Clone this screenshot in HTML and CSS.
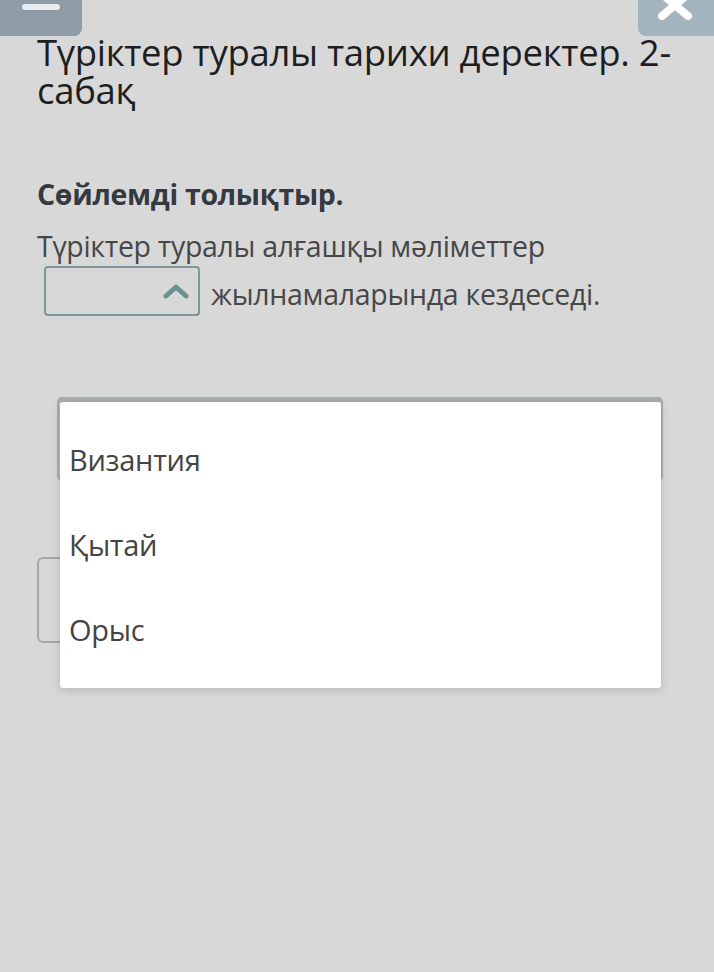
FILE: index.html
```html
<!DOCTYPE html>
<html lang="kk">
<head>
<meta charset="utf-8">
<link rel="stylesheet" href="styles.css">
</head>
<body>
<div class="topbar">
  <div class="btn-min"><span class="minus"></span></div>
  <div class="btn-close">
    <svg width="44" height="20" viewBox="0 0 44 20"><path d="M8 -6 L34 16 M34 -6 L8 16" stroke="#fff" stroke-width="8" stroke-linecap="round"/></svg>
  </div>
</div>
<main class="content">
  <h1 class="title">Түріктер туралы тарихи деректер. 2-сабақ</h1>
  <h2 class="instr">Сөйлемді толықтыр.</h2>
  <p class="sentence">Түріктер туралы алғашқы мәліметтер <span class="select"><svg class="chev" width="26" height="16" viewBox="0 0 26 16"><path d="M3 13 L13 4 L23 13" fill="none" stroke="#6f9090" stroke-width="5" stroke-linecap="round" stroke-linejoin="round"/></svg></span> жылнамаларында кездеседі.</p>
  <div class="stage">
    <div class="under-box1"></div>
    <div class="under-box2"></div>
    <ul class="dropdown">
      <li>Византия</li>
      <li>Қытай</li>
      <li>Орыс</li>
    </ul>
  </div>
</main>
</body>
</html>
```

FILE: styles.css
```css
html, body {
  margin: 0;
  padding: 0;
  background: #d8d8d8;
  font-family: "Open Sans", "Noto Sans", sans-serif;
  width: 714px;
  height: 972px;
  overflow: hidden;
}
.topbar {
  display: flex;
  justify-content: space-between;
  height: 36px;
}
.btn-min {
  width: 82px;
  height: 36px;
  background: #8d9ca7;
  border-bottom-right-radius: 8px;
  position: relative;
}
.minus {
  position: absolute;
  left: 22px;
  top: 4px;
  width: 38px;
  height: 6px;
  border-radius: 3px;
  background: #e9edf0;
}
.btn-close {
  width: 76px;
  height: 36px;
  background: #a3b4bf;
  border-bottom-left-radius: 8px;
  display: flex;
  justify-content: center;
}
.content {
  padding: 0 37px;
}
.title {
  margin: -3px 0 0;
  font-weight: 400;
  font-size: 36.5px;
  line-height: 38px;
  color: #1e1e1e;
  letter-spacing: -0.3px;
}
.instr {
  margin: 67px 0 0;
  font-size: 28.5px;
  line-height: 36px;
  font-weight: 700;
  color: #343a40;
  letter-spacing: -0.3px;
}
.sentence {
  margin: 10px 0 0;
  font-size: 28.5px;
  line-height: 48px;
  color: #474747;
  letter-spacing: -0.3px;
}
.select {
  display: inline-block;
  box-sizing: border-box;
  width: 156px;
  height: 50px;
  margin: -4px 4px -4px 7px;
  vertical-align: -7px;
  border: 2px solid #7c9898;
  border-radius: 4px;
  position: relative;
}
.chev {
  position: absolute;
  right: 9px;
  top: 15px;
}
.stage {
  position: relative;
  height: 400px;
  margin: 1px -37px 0;
}
.under-box1 {
  position: absolute;
  left: 57px;
  top: 78px;
  width: 606px;
  height: 84px;
  box-sizing: border-box;
  border: 2px solid #a9aeb0;
  border-top-width: 5px;
  border-radius: 5px;
  background: #b7bcbe;
}
.under-box2 {
  position: absolute;
  left: 37px;
  top: 238px;
  width: 300px;
  height: 86px;
  box-sizing: border-box;
  border: 2px solid #a2a7aa;
  border-radius: 6px;
}
.dropdown {
  position: absolute;
  left: 60px;
  top: 83px;
  width: 601px;
  height: 286px;
  margin: 0;
  padding: 15px 0 0;
  box-sizing: border-box;
  list-style: none;
  background: #fff;
  border-radius: 3px;
  box-shadow: 0 2px 10px rgba(0,0,0,0.16);
}
.dropdown li {
  height: 85px;
  display: flex;
  align-items: center;
  padding-left: 9px;
  font-size: 29px;
  color: #444;
  letter-spacing: -0.3px;
}
```
